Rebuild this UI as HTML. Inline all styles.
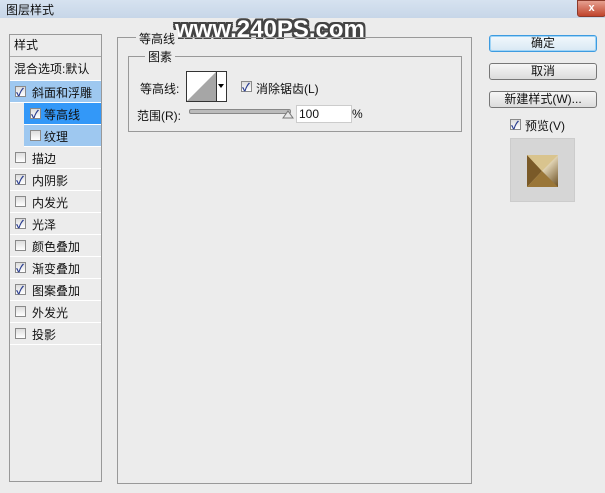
<!DOCTYPE html><html><head><meta charset="utf-8"><style>
body{margin:0;width:605px;height:493px;background:#ececec;font-family:"Liberation Sans","Noto Sans CJK SC",sans-serif;font-size:12px;color:#111;position:relative;overflow:hidden}
.a{position:absolute}
.cb{position:absolute;width:9px;height:9px;border:1px solid #8a8a8a;background:linear-gradient(#ddd,#fff)}
.cb.c::after{content:"✓";position:absolute;left:0;top:-3px;font-size:11px;color:#2a3d8f;font-weight:bold}
.row{position:absolute;left:10px;width:91px;height:21px;border-bottom:1px solid #fff}
.row span{position:absolute;left:22px;top:3px}
.btn{position:absolute;left:489px;width:106px;height:15px;border:1px solid #777;border-radius:3px;background:linear-gradient(#f6f6f6,#dcdcdc);text-align:center;line-height:15px}
</style></head><body>
<div class="a" style="left:0;top:0;width:605px;height:18px;background:linear-gradient(#d6e2f0,#c7d6e8)"></div>
<div class="a" style="left:6px;top:1px;font-size:12px">图层样式</div>
<div class="a" style="left:577px;top:0;width:27px;height:15px;background:linear-gradient(#e6a090,#c0442c);border:1px solid #8b3a2b;border-radius:0 0 3px 3px;color:#fff;font-weight:bold;text-align:center;line-height:14px;font-size:11px">x</div>
<div class="a" style="left:175px;top:16px;font-size:24px;font-weight:bold;color:#fff;text-shadow:-2px -2px 0 #444,2px -2px 0 #444,-2px 2px 0 #444,2px 2px 0 #444,0 2px 0 #444,0 -2px 0 #444,2px 0 0 #444,-2px 0 0 #444;letter-spacing:0px">www.240PS.com</div>
<!-- left panel -->
<div class="a" style="left:9px;top:34px;width:91px;height:446px;border:1px solid #999;border-top-color:#999"></div>
<div class="row" style="top:34px;height:22px;border-bottom:1px solid #aaa"><span style="left:4px;top:2px">样式</span></div>
<div class="row" style="top:57px;height:23px"><span style="left:4px;top:3px">混合选项:默认</span></div>
<div class="row" style="top:81px;background:#9ec8f0"><div class="cb c" style="left:5px;top:5px"></div><span>斜面和浮雕</span></div>
<div class="row" style="top:103px;left:24px;width:77px;background:#3398f8"><div class="cb c" style="left:6px;top:5px"></div><span style="left:20px">等高线</span></div>
<div class="row" style="top:125px;left:24px;width:77px;background:#9ec8f0"><div class="cb" style="left:6px;top:5px"></div><span style="left:20px">纹理</span></div>
<div class="row" style="top:147px"><div class="cb" style="left:5px;top:5px"></div><span>描边</span></div>
<div class="row" style="top:169px"><div class="cb c" style="left:5px;top:5px"></div><span>内阴影</span></div>
<div class="row" style="top:191px"><div class="cb" style="left:5px;top:5px"></div><span>内发光</span></div>
<div class="row" style="top:213px"><div class="cb c" style="left:5px;top:5px"></div><span>光泽</span></div>
<div class="row" style="top:235px"><div class="cb" style="left:5px;top:5px"></div><span>颜色叠加</span></div>
<div class="row" style="top:257px"><div class="cb c" style="left:5px;top:5px"></div><span>渐变叠加</span></div>
<div class="row" style="top:279px"><div class="cb c" style="left:5px;top:5px"></div><span>图案叠加</span></div>
<div class="row" style="top:301px"><div class="cb" style="left:5px;top:5px"></div><span>外发光</span></div>
<div class="row" style="top:323px"><div class="cb" style="left:5px;top:5px"></div><span>投影</span></div>
<!-- main group -->
<div class="a" style="left:117px;top:37px;width:353px;height:445px;border:1px solid #999"></div>
<div class="a" style="left:136px;top:30px;background:#ececec;padding:0 3px">等高线</div>
<div class="a" style="left:128px;top:56px;width:332px;height:74px;border:1px solid #999"></div>
<div class="a" style="left:145px;top:48px;background:#ececec;padding:0 3px">图素</div>
<div class="a" style="left:140px;top:80px">等高线:</div>
<div class="a" style="left:186px;top:71px;width:39px;height:29px;border:1px solid #333;background:#fff"></div>
<svg class="a" style="left:187px;top:72px" width="29" height="29"><polygon points="0,29 29,0 29,29" fill="#a6a6a6"/></svg>
<div class="a" style="left:216px;top:72px;width:1px;height:29px;background:#333"></div>
<svg class="a" style="left:218px;top:84px" width="6" height="4"><polygon points="0,0 6,0 3,4" fill="#000"/></svg>
<div class="cb c" style="left:241px;top:81px"></div>
<div class="a" style="left:256px;top:80px">消除锯齿(L)</div>
<div class="a" style="left:137px;top:107px">范围(R):</div>
<div class="a" style="left:189px;top:109px;width:100px;height:3px;border:1px solid #888;border-radius:2px;background:#bbb"></div>
<svg class="a" style="left:282px;top:109px" width="12" height="10"><polygon points="1,9 6,2 11,9" fill="#e8e8e8" stroke="#777"/></svg>
<div class="a" style="left:296px;top:105px;width:52px;height:16px;border:1px solid #ccc;background:#fff;line-height:16px;padding-left:2px">100</div>
<div class="a" style="left:352px;top:107px">%</div>
<!-- buttons -->
<div class="btn" style="top:35px;border-color:#3d9be0;box-shadow:inset 0 0 0 1px #9fd4f6;background:linear-gradient(#f2f8fc,#d8e8f4)">确定</div>
<div class="btn" style="top:63px">取消</div>
<div class="btn" style="top:91px">新建样式(W)...</div>
<div class="cb c" style="left:510px;top:119px"></div>
<div class="a" style="left:525px;top:117px">预览(V)</div>
<div class="a" style="left:510px;top:138px;width:65px;height:64px;background:#d6d6d6;border:1px solid #ccc;box-sizing:border-box"></div>
<svg class="a" style="left:527px;top:155px" width="31" height="32"><defs><linearGradient id="g" x1="0" y1="0" x2="1" y2="1"><stop offset="0" stop-color="#c9a868"/><stop offset=".5" stop-color="#e0d3b4"/><stop offset="1" stop-color="#6a4e22"/></linearGradient></defs><rect width="31" height="32" fill="url(#g)"/><polygon points="0,0 15,16 0,32" fill="#7a5a28"/><polygon points="0,32 15,16 31,32" fill="#9a7638"/><polygon points="0,0 31,0 15,16" fill="#d9c48e"/></svg>
</body></html>
